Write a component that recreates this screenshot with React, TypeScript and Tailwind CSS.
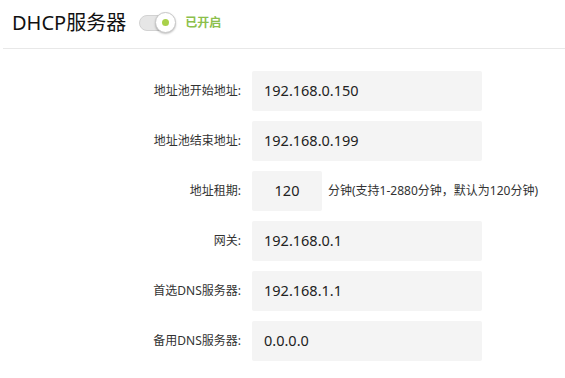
const FONT = { fontFamily: '"Noto Sans", "Noto Sans CJK SC", sans-serif' };

const ROWS: { label: string; value: string; short?: boolean; hint?: string }[] = [
  { label: "地址池开始地址:", value: "192.168.0.150" },
  { label: "地址池结束地址:", value: "192.168.0.199" },
  { label: "地址租期:", value: "120", short: true, hint: "分钟(支持1-2880分钟，默认为120分钟)" },
  { label: "网关:", value: "192.168.0.1" },
  { label: "首选DNS服务器:", value: "192.168.1.1" },
  { label: "备用DNS服务器:", value: "0.0.0.0" },
];

function Toggle() {
  return (
    <div className="relative w-[37px] h-[22px] flex items-center">
      <div className="w-[32px] h-[16px] rounded-full bg-[#e6e6e6] border border-[#d2d2d2]" />
      <div className="absolute right-0 top-0 w-[21px] h-[21px] rounded-full bg-white border border-[#c8c8c8] shadow-[0_1px_2px_rgba(0,0,0,0.25)] grid place-items-center">
        <div className="w-[7px] h-[7px] rounded-full bg-[#a9d14a]" />
      </div>
    </div>
  );
}

export default function App() {
  return (
    <div className="w-[565px] h-[378px] bg-white text-[#333]" style={FONT}>
      <div className="h-[49px] ml-[3px] border-b border-[#e8e8e8] flex items-center pl-[9px] pb-[2px]">
        <span className="text-[20px] leading-none text-[#111]">DHCP服务器</span>
        <div className="ml-[13px]">
          <Toggle />
        </div>
        <span className="ml-[9px] text-[12px] font-bold text-[#8cbf4c]">已开启</span>
      </div>

      <div className="mt-[22px] flex flex-col gap-[10px]">
        {ROWS.map((r) => (
          <div key={r.label} className="flex items-center h-[40px]">
            <div className="w-[241px] text-right text-[12px] text-[#333]">{r.label}</div>
            <div
              className={
                r.short
                  ? "ml-[11px] w-[70px] h-[40px] rounded-[2px] bg-[#f4f4f4] flex items-center justify-center text-[14.5px] text-[#222]"
                  : "ml-[11px] w-[230px] h-[40px] rounded-[2px] bg-[#f4f4f4] flex items-center pl-[12px] text-[14.5px] text-[#222]"
              }
            >
              {r.value}
            </div>
            {r.hint && <span className="ml-[6px] text-[12px] text-[#333] whitespace-nowrap">{r.hint}</span>}
          </div>
        ))}
      </div>
    </div>
  );
}
